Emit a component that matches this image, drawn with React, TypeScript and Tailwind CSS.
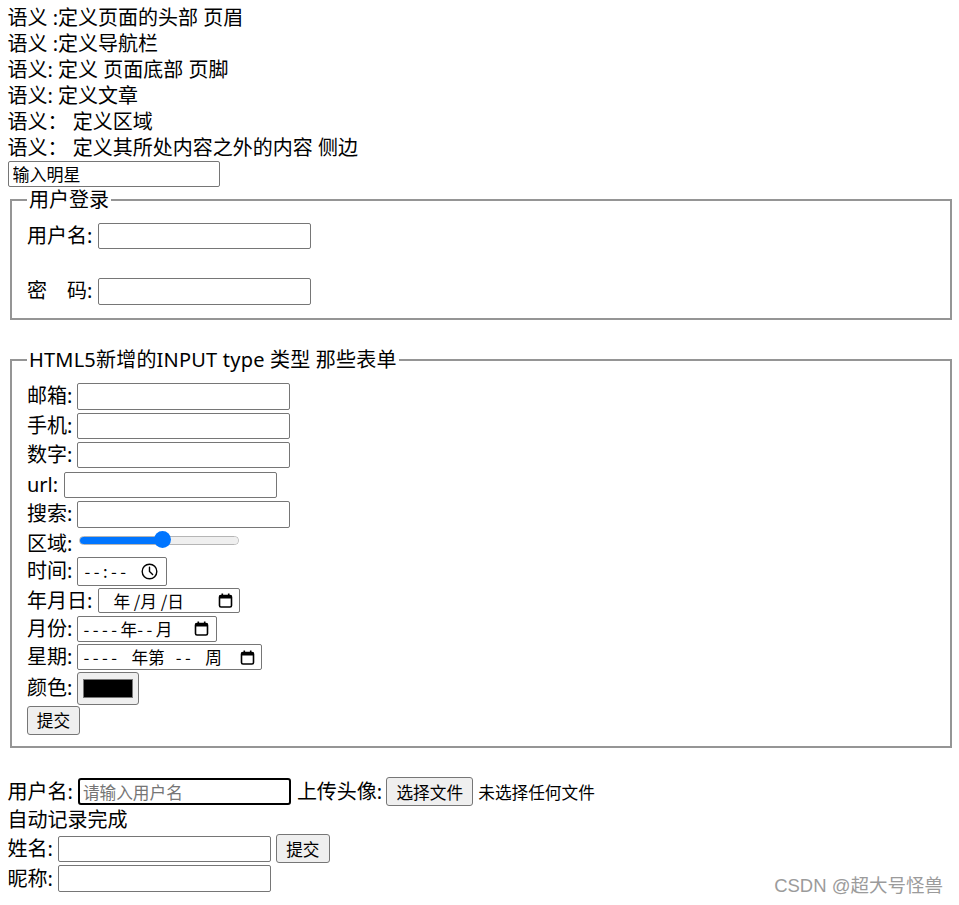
const CalendarIcon = () => (
    <svg width="15" height="15" viewBox="0 0 15 15" className="shrink-0">
        <rect x="1.5" y="2.5" width="12" height="11.5" rx="1.5" fill="none" stroke="#000" strokeWidth="1.6" />
        <rect x="1.5" y="2.5" width="12" height="3" fill="#000" />
        <rect x="3.5" y="0.5" width="1.6" height="3" fill="#000" />
        <rect x="9.9" y="0.5" width="1.6" height="3" fill="#000" />
    </svg>
)

const ClockIcon = () => (
    <svg width="17" height="17" viewBox="0 0 17 17" className="shrink-0">
        <circle cx="8.5" cy="8.5" r="7.3" fill="none" stroke="#000" strokeWidth="1.4" />
        <path d="M8.5 4.2 V8.5 L11.6 11.4" fill="none" stroke="#000" strokeWidth="1.4" strokeLinecap="round" />
    </svg>
)

const TextBox = ({ w = "w-[213px]", h = "h-[26px]", ml = "ml-[5px]" }: { w?: string, h?: string, ml?: string }) => (
    <input readOnly className={`${w} ${h} ${ml} border border-[#767676] rounded-[2px] px-[4px] text-[16.67px] bg-white outline-none`} />
)

const Row = ({ h, label, children }: { h: string, label: string, children: React.ReactNode }) => (
    <div className={`flex items-center ${h}`}>
        <span className="whitespace-pre">{label}</span>
        {children}
    </div>
)

const App = () => {
    return (
        <div className="relative min-h-[905px] bg-white pl-[7.5px] pr-[4.5px] pt-[5px] text-[20px] leading-[26px] text-black font-['Noto_Sans','Noto_Sans_CJK_SC',sans-serif]">

            <div>语义 :定义页面的头部 页眉</div>
            <div>语义 :定义导航栏</div>
            <div>语义: 定义 页面底部 页脚</div>
            <div>语义: 定义文章</div>
            <div>语义： 定义区域</div>
            <div>语义： 定义其所处内容之外的内容 侧边</div>

            <div className="flex h-[26px]">
                <input readOnly value="输入明星" className="w-[212px] h-[26px] border border-[#767676] rounded-[2px] px-[4px] text-[17px] outline-none font-['Noto_Sans_CJK_SC',sans-serif]" />
            </div>

            {/* 用户登录 */}
            <fieldset className="mx-[2.5px] border-2 border-[#959595] px-[15px] pt-[9px] pb-[13px]">
                <legend className="px-[2px] leading-[26px]">用户登录</legend>
                <Row h="h-[28px]" label="用户名:">
                    <TextBox ml="ml-[6px]" />
                </Row>
                <div className="h-[27px]"></div>
                <Row h="h-[28px]" label="密　码:">
                    <TextBox ml="ml-[6px]" h="h-[27px]" />
                </Row>
            </fieldset>

            {/* HTML5 input types */}
            <fieldset className="mx-[2.5px] mt-[27px] border-2 border-[#959595] px-[15px] pt-[8px] pb-[11px]">
                <legend className="px-[2px] leading-[26px] tracking-[0.2px]">HTML5新增的INPUT type 类型 那些表单</legend>

                <Row h="h-[30px]" label="邮箱:"><TextBox h="h-[27px]" /></Row>
                <Row h="h-[29px]" label="手机:"><TextBox /></Row>
                <Row h="h-[30px]" label="数字:"><TextBox /></Row>
                <Row h="h-[29px]" label="url:"><TextBox ml="ml-[6px]" /></Row>
                <Row h="h-[30px]" label="搜索:"><TextBox h="h-[27px]" /></Row>

                <div className="flex h-[26px]">
                    <span className="self-end leading-[22px]">区域:</span>
                    <div className="relative ml-[7px] mt-[2px] h-[18px] w-[160px]">
                        <div className="mt-[5px] flex h-[9px] w-[160px] overflow-hidden rounded-full border border-[#b5b5b5]">
                            <div className="h-full w-[83px] bg-[#0075ff]"></div>
                            <div className="h-full flex-1 bg-[#efefef]"></div>
                        </div>
                        <div className="absolute left-[75px] top-[0px] h-[17px] w-[17px] rounded-full bg-[#0075ff]"></div>
                    </div>
                </div>

                <Row h="h-[32px]" label="时间:">
                    <div className="ml-[5px] flex h-[29px] w-[90px] items-center border border-[#767676] rounded-[2px] pl-[6px] pr-[8px] text-[16.67px] font-['Noto_Sans_CJK_SC',sans-serif]">
                        <span className="whitespace-pre tracking-[3.5px]">--:--</span>
                        <span className="flex-1"></span>
                        <ClockIcon />
                    </div>
                </Row>

                <Row h="h-[27px]" label="年月日:">
                    <div className="ml-[6px] flex h-[25px] w-[142px] items-center border border-[#767676] rounded-[2px] pl-[14px] pr-[6px] text-[16.67px] font-['Noto_Sans_CJK_SC',sans-serif]">
                        <span className="whitespace-pre">年 /月 /日</span>
                        <span className="flex-1"></span>
                        <CalendarIcon />
                    </div>
                </Row>

                <Row h="h-[29px]" label="月份:">
                    <div className="ml-[5px] flex h-[26px] w-[140px] items-center border border-[#767676] rounded-[2px] pl-[5px] pr-[7px] text-[16.67px] font-['Noto_Sans_CJK_SC',sans-serif]">
                        <span className="tracking-[3.5px]">----</span>
                        <span>年</span>
                        <span className="tracking-[3.5px]">--</span>
                        <span>月</span>
                        <span className="flex-1"></span>
                        <CalendarIcon />
                    </div>
                </Row>

                <Row h="h-[28px]" label="星期:">
                    <div className="ml-[5px] flex h-[26px] w-[185px] items-center border border-[#767676] rounded-[2px] pl-[5px] pr-[6px] text-[16.67px] font-['Noto_Sans_CJK_SC',sans-serif]">
                        <span className="whitespace-pre tracking-[3.5px]">---- </span>
                        <span className="whitespace-pre"> 年第 </span>
                        <span className="whitespace-pre tracking-[3.5px]"> -- </span>
                        <span className="whitespace-pre"> 周</span>
                        <span className="flex-1"></span>
                        <CalendarIcon />
                    </div>
                </Row>

                <Row h="h-[34px]" label="颜色:">
                    <div className="ml-[5px] flex h-[33px] w-[62px] items-center justify-center border border-[#767676] rounded-[3px] bg-[#efefef]">
                        <div className="h-[19px] w-[50px] border border-[#777] bg-black"></div>
                    </div>
                </Row>

                <div className="flex h-[30px] items-center">
                    <button className="h-[29px] w-[53px] border border-[#767676] rounded-[3px] bg-[#efefef] text-[16.67px] font-['Noto_Sans_CJK_SC',sans-serif]">提交</button>
                </div>
            </fieldset>

            {/* bottom form */}
            <div className="mt-[28px] flex h-[31px] items-center">
                <span>用户名:</span>
                <input readOnly placeholder="请输入用户名" className="ml-[5px] h-[27px] w-[213px] border-2 border-black rounded-[3px] px-[3px] text-[16.67px] outline-none placeholder:text-[#757575] font-['Noto_Sans_CJK_SC',sans-serif]" />
                <span className="ml-[6px]">上传头像:</span>
                <button className="ml-[4px] h-[29px] w-[87px] border border-[#767676] rounded-[3px] bg-[#efefef] text-[16.67px] font-['Noto_Sans_CJK_SC',sans-serif]">选择文件</button>
                <span className="ml-[5px] text-[16.67px] font-['Noto_Sans_CJK_SC',sans-serif]">未选择任何文件</span>
            </div>

            <div className="leading-[26px]">自动记录完成</div>

            <div className="flex h-[31px] items-center">
                <span>姓名:</span>
                <TextBox />
                <button className="ml-[5px] h-[29px] w-[54px] border border-[#767676] rounded-[3px] bg-[#efefef] text-[16.67px] font-['Noto_Sans_CJK_SC',sans-serif]">提交</button>
            </div>

            <div className="flex h-[29px] items-center">
                <span>昵称:</span>
                <TextBox h="h-[27px]" />
            </div>

            <div className="absolute right-[16px] top-[874px] text-[18.5px] leading-[24px] text-[#9b9b9b] font-['Liberation_Sans','Noto_Sans_CJK_SC',sans-serif]">
                CSDN @超大号怪兽
            </div>
        </div>
    )
}

export default App
